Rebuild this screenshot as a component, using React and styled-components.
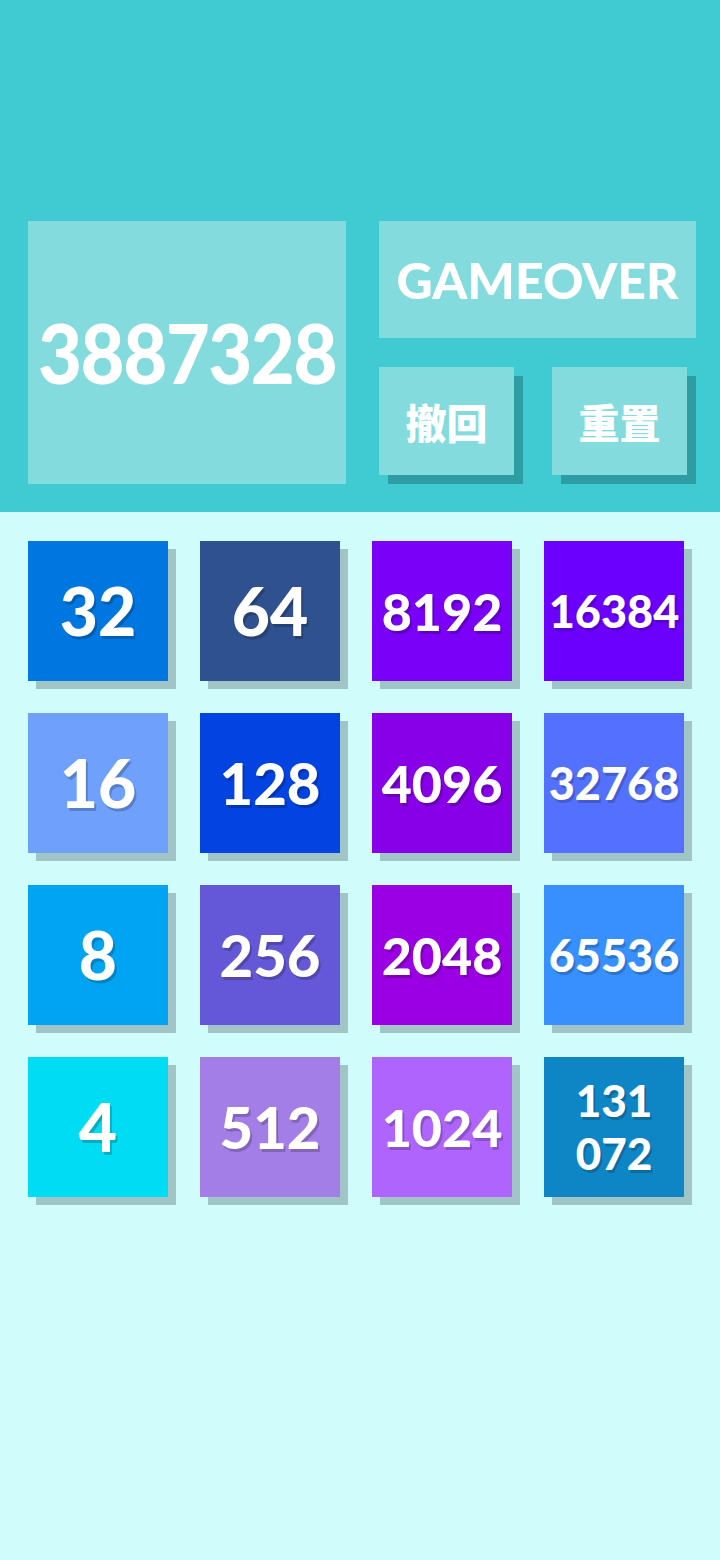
import React from 'react';
import styled, { createGlobalStyle } from 'styled-components';

const GlobalStyle = createGlobalStyle`
  html, body {
    margin: 0;
    padding: 0;
    background: #d0fdfc;
  }
  body {
    font-family: Lato, "Noto Sans", "Noto Sans CJK SC", sans-serif;
  }
`;

const tiles = [
  [32, '#0077e0'], [64, '#2f5190'], [8192, '#7a00f7'], [16384, '#6c00ff'],
  [16, '#6fa0fb'], [128, '#0343e2'], [4096, '#8800e8'], [32768, '#5470fe'],
  [8, '#00a4f3'], [256, '#6558d8'], [2048, '#9b00e4'], [65536, '#3790fe'],
  [4, '#00dcf3'], [512, '#a37ee6'], [1024, '#af64fe'], [131072, '#0e86c6'],
];

const sizeFor = (len) => {
  if (len <= 2) return 66;
  if (len === 3) return 58;
  if (len === 4) return 52;
  if (len === 5) return 45;
  return 44;
};

const App = () => {
  return (
    <Page>
      <GlobalStyle />
      <Header>
        <ScoreBox>
          <Score>3887328</Score>
        </ScoreBox>
        <Side>
          <StatusBox>GAMEOVER</StatusBox>
          <ButtonRow>
            <ActionButton>撤回</ActionButton>
            <ActionButton>重置</ActionButton>
          </ButtonRow>
        </Side>
      </Header>
      <Board>
        {tiles.map(([value, color]) => {
          const text = String(value);
          const lines = text.length > 5 ? [text.slice(0, 3), text.slice(3)] : [text];
          return (
            <Tile key={value} $bg={color} $size={sizeFor(text.length)}>
              {lines.map((l) => (
                <TileLine key={l}>{l}</TileLine>
              ))}
            </Tile>
          );
        })}
      </Board>
    </Page>
  );
};

const Page = styled.div`
  width: 720px;
  min-height: 1560px;
  background: #d0fdfc;
`;

const Header = styled.div`
  background: #40cbd2;
  height: 512px;
  box-sizing: border-box;
  padding: 221px 24px 28px 28px;
  display: flex;
  gap: 33px;
`;

const ScoreBox = styled.div`
  width: 318px;
  background: #84dbdd;
  display: flex;
  align-items: center;
  justify-content: center;
`;

const Score = styled.div`
  color: #fff;
  font-size: 76px;
  font-weight: 900;
  letter-spacing: -1.5px;
  transform: scaleY(1.08);
`;

const Side = styled.div`
  flex: 1;
  display: flex;
  flex-direction: column;
  gap: 29px;
`;

const StatusBox = styled.div`
  height: 117px;
  background: #84dbdd;
  display: flex;
  align-items: center;
  justify-content: center;
  color: #fff;
  font-size: 50px;
  font-weight: 900;
`;

const ButtonRow = styled.div`
  display: flex;
  gap: 38px;
`;

const ActionButton = styled.div`
  width: 135px;
  height: 108px;
  background: #84dbdd;
  box-shadow: 9px 9px 0 #2e9da3;
  display: flex;
  align-items: center;
  justify-content: center;
  color: #fff;
  font-family: "Noto Sans CJK SC", "Noto Sans CJK TC", sans-serif;
  font-size: 41px;
  font-weight: 900;
`;

const Board = styled.div`
  padding: 29px 0 0 28px;
  display: grid;
  grid-template-columns: repeat(4, 140px);
  grid-auto-rows: 140px;
  gap: 32px;
`;

const Tile = styled.div`
  background: ${(p) => p.$bg};
  box-shadow: 8px 8px 0 #a1c5c6;
  display: flex;
  flex-direction: column;
  align-items: center;
  justify-content: center;
  color: #fff;
  font-size: ${(p) => p.$size}px;
  font-weight: 900;
  line-height: 1.2;
  text-shadow: 2px 3px 0 rgba(0, 0, 0, 0.2);
`;

const TileLine = styled.span`
  display: block;
`;

export default App;
